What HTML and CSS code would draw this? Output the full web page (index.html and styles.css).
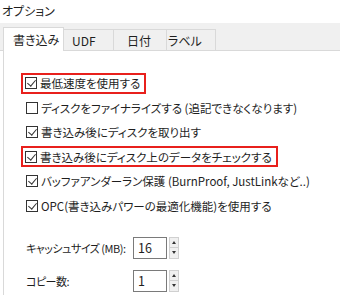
FILE: index.html
```
<!DOCTYPE html>
<html lang="ja">
<head>
<meta charset="utf-8">
<title>オプション</title>
<link rel="stylesheet" href="styles.css">
</head>
<body>
<div class="title">オプション</div>
<div class="tabs">
  <div class="tab active">書き込み</div>
  <div class="tab t-udf">UDF</div>
  <div class="tab t-date">日付</div>
  <div class="tab t-label">ラベル</div>
</div>
<div class="panel">
  <div class="row"><span class="mark">
    <span class="cb on"></span><span class="lbl">最低速度を使用する</span>
  </span></div>
  <div class="row">
    <span class="cb"></span><span class="lbl">ディスクをファイナライズする (追記できなくなります)</span>
  </div>
  <div class="row">
    <span class="cb on"></span><span class="lbl">書き込み後にディスクを取り出す</span>
  </div>
  <div class="row"><span class="mark">
    <span class="cb on"></span><span class="lbl">書き込み後にディスク上のデータをチェックする</span>
  </span></div>
  <div class="row">
    <span class="cb on"></span><span class="lbl">バッファアンダーラン保護 (BurnProof, JustLinkなど..)</span>
  </div>
  <div class="row">
    <span class="cb on"></span><span class="lbl">OPC(書き込みパワーの最適化機能)を使用する</span>
  </div>

  <div class="spin-row first">
    <span class="spin-lbl">キャッシュサイズ (MB):</span>
    <span class="num">16</span>
    <span class="arrows"><span class="up"></span><span class="down"></span></span>
  </div>
  <div class="spin-row">
    <span class="spin-lbl">コピー数:</span>
    <span class="num">1</span>
    <span class="arrows"><span class="up"></span><span class="down"></span></span>
  </div>
</div>
</body>
</html>
```
FILE: styles.css
```
* {
  margin: 0;
  padding: 0;
  box-sizing: border-box;
}

body {
  width: 340px;
  height: 295px;
  overflow: hidden;
  background: #fff;
  color: #1e1e1e;
  font-family: "Noto Sans CJK JP", "Noto Sans", sans-serif;
  font-size: 11.5px;
  font-feature-settings: "palt";
}

.title {
  height: 23px;
  padding: 3px 0 0 2px;
  line-height: 16px;
  font-size: 12px;
}

.tabs {
  height: 28px;
  background: #f0f0f0;
  border-bottom: 1px solid #d9d9d9;
  display: flex;
  align-items: flex-end;
  padding-left: 3px;
}

.tab {
  height: 21px;
  border: 1px solid #d9d9d9;
  border-bottom: none;
  border-left: none;
  padding: 3px 0 0 8px;
  line-height: 16px;
  font-size: 12px;
}

.tab.active {
  width: 61px;
  height: 24px;
  background: #fff;
  border-left: 1px solid #d9d9d9;
  margin-bottom: -1px;
  padding: 4px 0 0 9px;
}
.t-udf { width: 50px; }
.t-date { width: 53px; padding-left: 13px; }
.t-label { width: 49px; padding-left: 1px; }

.panel {
  margin-left: 3px;
  border-left: 1px solid #d9d9d9;
  height: 244px;
  padding: 20px 0 0 21px;
}

.row {
  height: 24.5px;
  display: flex;
  align-items: center;
}

.mark {
  display: flex;
  align-items: center;
  height: 21px;
  margin-left: -4px;
  padding: 0 4px 0 4px;
  border: 2px solid #e8201c;
  margin-right: -2px;
}
.row .mark .cb { margin-left: -2px; }

.cb {
  width: 12px;
  height: 12px;
  border: 1px solid #333;
  background: #fff;
  position: relative;
  flex: none;
  margin-left: 1px;
}

.cb.on::after {
  content: "";
  position: absolute;
  left: 3px;
  top: 0;
  width: 4px;
  height: 7px;
  border: solid #333;
  border-width: 0 1.3px 1.3px 0;
  transform: rotate(40deg);
}

.lbl {
  margin-left: 3px;
  white-space: nowrap;
  line-height: 16px;
}

.spin-row {
  display: flex;
  align-items: center;
  height: 22px;
  margin-top: 11px;
}
.spin-row.first { margin-top: 19px; }

.spin-lbl {
  width: 108px;
  flex: none;
  padding-left: 1px;
  white-space: nowrap;
  letter-spacing: -0.5px;
  font-size: 11px;
}

.num {
  width: 34px;
  height: 22px;
  border: 1px solid #7a7a7a;
  padding: 2px 0 0 4px;
  line-height: 16px;
  font-size: 12.5px;
}

.arrows {
  display: flex;
  flex-direction: column;
  margin-left: 2px;
  height: 22px;
}

.up, .down {
  width: 10px;
  height: 11px;
  background: #f0f0f0;
  border: 1px solid #d0d0d0;
  position: relative;
}
.down { border-top: none; }

.up::after, .down::after {
  content: "";
  position: absolute;
  left: 2px;
  border-left: 2.5px solid transparent;
  border-right: 2.5px solid transparent;
}
.up::after {
  top: 3px;
  border-bottom: 3px solid #333;
}
.down::after {
  top: 3px;
  border-top: 3px solid #333;
}
```
